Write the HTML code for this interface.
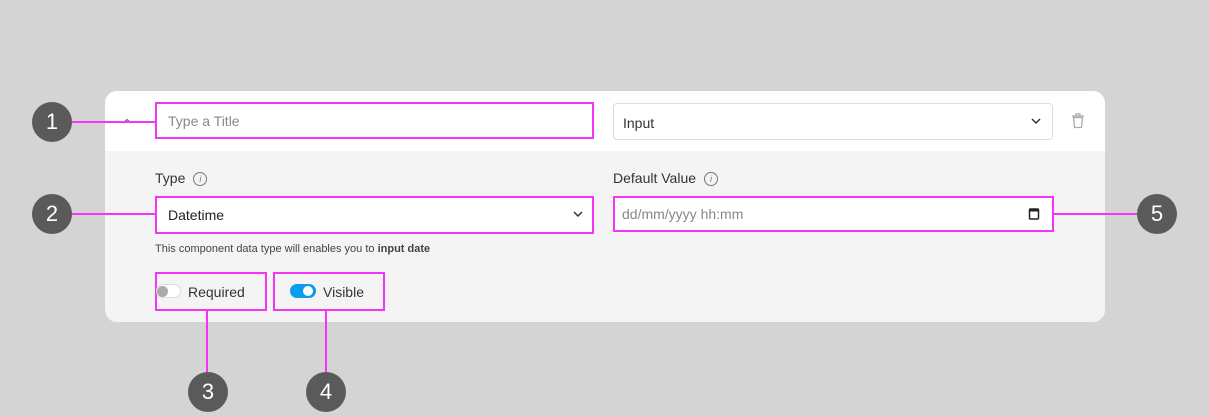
<!DOCTYPE html><html><head><style>
body{margin:0;width:1209px;height:417px;background:#d4d4d4;font-family:"Liberation Sans",sans-serif;position:relative;overflow:hidden}
.a{position:absolute;box-sizing:border-box}
.card{left:105px;top:91px;width:1000px;height:231px;border-radius:12px;background:#f4f4f4;overflow:hidden}
.hd{left:0;top:0;width:1000px;height:60px;background:#fff}
.mg{border:2px solid #f535f5}
.c{width:40px;height:40px;border-radius:50%;background:#5a5a5a;color:#fff;font-size:22px;text-align:center;line-height:40px}
.ln{background:#f535f5}
.t{font-size:14px;color:#333}
.info{display:inline-block;width:12px;height:12px;border:1px solid #777;border-radius:50%;font-size:9px;line-height:12px;text-align:center;color:#777;font-style:italic;margin-left:8px;vertical-align:1px}
</style></head><body>
<div class="a card"><div class="a hd"></div></div>
<svg class="a" style="left:121px;top:118px" width="12" height="6"><path d="M2 5l4-3.5 4 3.5" stroke="#666" stroke-width="1.2" fill="none"/></svg>
<div class="a mg" style="left:155px;top:102px;width:439px;height:37px;background:#fff"></div>
<div class="a t" style="left:168px;top:113px;color:#888">Type a Title</div>
<div class="a" style="left:613px;top:103px;width:440px;height:37px;background:#fff;border:1px solid #ddd;border-radius:4px"></div>
<div class="a t" style="left:623px;top:115px">Input</div>
<svg class="a" style="left:1031px;top:117px" width="10" height="8"><path d="M1 2l4 4 4-4" stroke="#333" stroke-width="1.5" fill="none"/></svg>
<svg class="a" style="left:1071px;top:113px" width="14" height="16"><path d="M1 3h12M5 3V1h4v2M2.5 4.5h9l-1 10h-7z" stroke="#aaa" stroke-width="1.3" fill="none"/></svg>
<div class="a t" style="left:155px;top:170px">Type<span class="info">i</span></div>
<div class="a t" style="left:613px;top:170px">Default Value<span class="info">i</span></div>
<div class="a mg" style="left:155px;top:196px;width:439px;height:38px;background:#fff"></div>
<div class="a t" style="left:168px;top:207px;color:#222">Datetime</div>
<svg class="a" style="left:573px;top:210px" width="10" height="8"><path d="M1 2l4 4 4-4" stroke="#333" stroke-width="1.5" fill="none"/></svg>
<div class="a mg" style="left:613px;top:196px;width:441px;height:36px;background:#fff"></div>
<div class="a t" style="left:622px;top:206px;color:#888">dd/mm/yyyy hh:mm</div>
<svg class="a" style="left:1028px;top:207px" width="12" height="13"><rect x="1.5" y="2" width="9" height="10" rx="1" stroke="#222" stroke-width="1.5" fill="none"/><rect x="1" y="2" width="10" height="2.5" fill="#222"/></svg>
<div class="a" style="left:155px;top:243px;font-size:11px;color:#444">This component data type will enables you to <b>input date</b></div>
<div class="a mg" style="left:155px;top:272px;width:112px;height:39px"></div>
<div class="a" style="left:156px;top:284px;width:25px;height:14px;border-radius:7px;background:#fff;border:1px solid #ddd"></div>
<div class="a" style="left:157px;top:286px;width:11px;height:11px;border-radius:50%;background:#aaa"></div>
<div class="a t" style="left:188px;top:284px">Required</div>
<div class="a mg" style="left:273px;top:272px;width:112px;height:39px"></div>
<div class="a" style="left:290px;top:284px;width:26px;height:14px;border-radius:7px;background:#0a9cf0"></div>
<div class="a" style="left:303px;top:286px;width:10px;height:10px;border-radius:50%;background:#fff"></div>
<div class="a t" style="left:323px;top:284px">Visible</div>
<div class="a ln" style="left:72px;top:121px;width:84px;height:2px"></div>
<div class="a ln" style="left:72px;top:213px;width:84px;height:2px"></div>
<div class="a ln" style="left:1053px;top:213px;width:86px;height:2px"></div>
<div class="a ln" style="left:206px;top:310px;width:2px;height:64px"></div>
<div class="a ln" style="left:325px;top:310px;width:2px;height:64px"></div>
<div class="a c" style="left:32px;top:102px">1</div>
<div class="a c" style="left:32px;top:194px">2</div>
<div class="a c" style="left:1137px;top:194px">5</div>
<div class="a c" style="left:188px;top:372px">3</div>
<div class="a c" style="left:306px;top:372px">4</div>
</body></html>
